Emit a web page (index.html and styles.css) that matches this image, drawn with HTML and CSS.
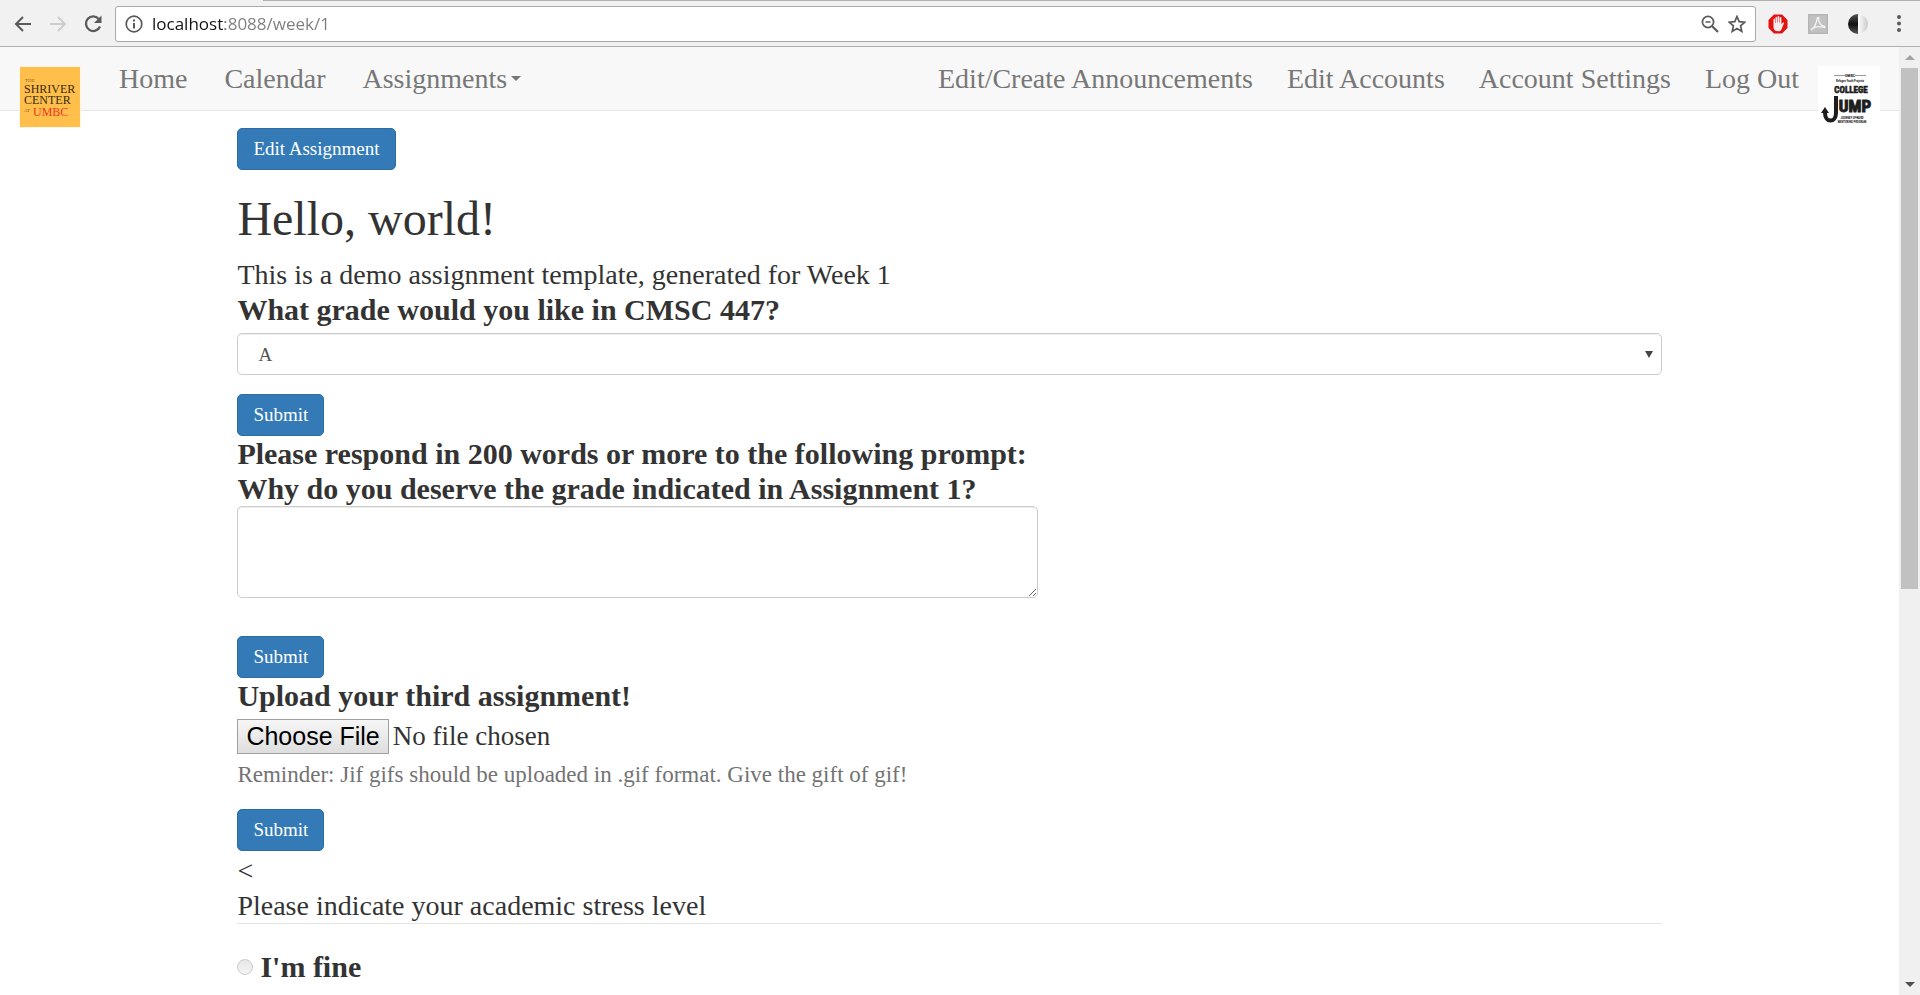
FILE: index.html
```html
<!DOCTYPE html>
<html lang="en">
<head>
<meta charset="utf-8">
<title>Week 1</title>
<link rel="stylesheet" href="styles.css">
</head>
<body>
<header class="toolbar">
  <div class="tab-edge"></div>
  <button class="tool" aria-label="Back"><svg width="20" height="20" viewBox="0 0 20 20"><path d="M18 10H3M10 3L3 10l7 7" fill="none" stroke="#5a5a5a" stroke-width="2"/></svg></button>
  <button class="tool" aria-label="Forward"><svg width="20" height="20" viewBox="0 0 20 20"><path d="M2 10h15M10 3l7 7-7 7" fill="none" stroke="#cecece" stroke-width="2"/></svg></button>
  <button class="tool" aria-label="Reload"><svg width="20" height="20" viewBox="0 0 20 20"><path d="M16 5.200A7.300 7.300 0 1 0 17 12.500" fill="none" stroke="#5a5a5a" stroke-width="2.300"/><path d="M18.500 1.500V9H11z" fill="#5a5a5a"/></svg></button>
  <div class="omnibox">
    <svg width="18" height="18" viewBox="0 0 18 18"><circle cx="9" cy="9" r="7.800" fill="none" stroke="#5a5a5a" stroke-width="1.700"/><path d="M8 4.500h2v2H8zM8 8h2v5.500H8z" fill="#5a5a5a"/></svg>
    <input class="url" type="text" aria-label="Address" value="localhost:8088/week/1">
    <button class="tool" aria-label="Zoom"><svg width="18" height="18" viewBox="0 0 18 18"><circle cx="7" cy="7" r="5.600" fill="none" stroke="#5a5a5a" stroke-width="1.700"/><path d="M4.500 7h5" stroke="#5a5a5a" stroke-width="1.500"/><path d="M11 11l6 6" stroke="#5a5a5a" stroke-width="2.200"/></svg></button>
    <button class="tool" aria-label="Bookmark"><svg width="18" height="18" viewBox="0 0 18 18"><path d="M9 1.500l2.200 5.200 5.600.5-4.200 3.700 1.200 5.500L9 13.500l-4.800 2.900 1.200-5.500L1.200 7.200l5.600-.5z" fill="none" stroke="#5a5a5a" stroke-width="1.700"/></svg></button>
  </div>
  <div class="extensions">
    <button class="tool" aria-label="Ad blocker"><svg width="20" height="20" viewBox="0 0 20 20"><path d="M6 .5h8L19.500 6v8L14 19.500H6L.5 14V6z" fill="#e2130f"/><path d="M5.500 9.500V5.200c0-1 1.500-1 1.500 0V9h.5V3.600c0-1.100 1.600-1.100 1.600 0V8.500h.5V2.900c0-1.100 1.700-1.100 1.700 0v5.600h.5V3.900c0-1.100 1.600-1.100 1.600 0v6.600l1-1.500c.7-1 1.900-.4 1.500.6l-2.300 5.300c-.7 1.600-1.600 2.300-3.300 2.300-3 0-4.800-1.500-4.800-4z" fill="#f3eeee"/></svg></button>
    <button class="tool" aria-label="PDF"><svg width="20" height="20" viewBox="0 0 20 20"><path d="M0 0h20v20H0z" fill="#b5b5b5"/><path d="M1.500 1.500h17v17h-17z" fill="#c1c1c1"/><path d="M3.500 15.500c2-.5 5-5.500 5.700-11 .2-1.500 1.800-1.500 1.500 0-.7 3.500 2.300 7.500 5.600 8 1.200.3.700 1.400-.6 1-3-1-7-1-10 .3-1.500.7-2.500 2-2.200 1.700z" fill="none" stroke="#f4f4f4" stroke-width="1.300"/></svg></button>
    <button class="tool" aria-label="Contrast"><svg width="20" height="20" viewBox="0 0 20 20"><defs><linearGradient id="dark" x2="0" y2="1"><stop stop-color="#555"/><stop offset=".5" stop-color="#111"/><stop offset="1" stop-color="#555"/></linearGradient><linearGradient id="light"><stop stop-color="#fff"/><stop offset="1" stop-color="#c9c9c9"/></linearGradient></defs><path d="M10 0a10 10 0 0 0 0 20z" fill="url(#dark)"/><path d="M10 0a10 10 0 0 1 0 20z" fill="url(#light)"/></svg></button>
  </div>
  <button class="tool more" aria-label="Menu"><svg width="6" height="20" viewBox="0 0 6 20"><g fill="#5a5a5a"><circle cx="3" cy="3" r="2"/><circle cx="3" cy="9.500" r="2"/><circle cx="3" cy="16" r="2"/></g></svg></button>
</header>
<div class="viewport">
  <div class="page">
    <nav class="navbar">
      <a class="logo" href="#" aria-label="Shriver Center"><svg width="62" height="62" viewBox="0 0 62 62"><path d="M0 0h62v62H0z" fill="#fff6e3"/><path d="M1 1h60v60H1z" fill="#ffbf4a"/><g font-family="Liberation Serif, serif" fill="#3a2a10"><text x="6" y="16" font-size="5" fill="#7d5d26">THE</text><text x="5" y="27" font-size="12">SHRIVER</text><text x="5" y="38" font-size="12">CENTER</text><text x="5" y="46" font-size="5" fill="#7d5d26">AT</text></g><text x="14" y="50" font-size="12" font-family="Liberation Serif, serif" fill="#ee3424">UMBC</text></svg></a>
      <div class="links">
        <a href="#">Home</a>
        <a href="#">Calendar</a>
        <a href="#" class="drop">Assignments<span class="caret"></span></a>
      </div>
      <div class="links right">
        <a href="#">Edit/Create Announcements</a>
        <a href="#">Edit Accounts</a>
        <a href="#">Account Settings</a>
        <a href="#">Log Out</a>
      </div>
      <a class="logo" href="#" aria-label="College Jump"><svg width="62" height="62" viewBox="0 0 62 62"><path d="M0 0h62v62H0z" fill="#fff"/><path d="M16 9.500h11M37 9.500h11" stroke="#999"/><g fill="#1d1d1d" font-weight="700" font-family="Roboto Condensed, Liberation Sans, sans-serif" text-anchor="middle"><text x="32" y="11" font-size="4">UMBC</text><text x="32" y="16" font-size="3">Refugee Youth Projects</text><text x="33" y="27" font-size="9" stroke="#1d1d1d" stroke-width=".6">COLLEGE</text><text x="37" y="46" font-size="17" stroke="#1d1d1d" stroke-width="1">UMP</text><text x="34" y="53" font-size="3">JOURNEY UPWARD</text><text x="34" y="57" font-size="3">MENTORING PROGRAM</text></g><path d="M18 30v17c0 10-11 10-11 0v-2" fill="none" stroke="#1d1d1d" stroke-width="4"/><path d="M3 47l4-6 4 6z" fill="#1d1d1d"/></svg></a>
    </nav>
    <main class="content">
      <button class="btn">Edit Assignment</button>
      <h1>Hello, world!</h1>
      <p class="text">This is a demo assignment template, generated for Week 1</p>
      <form class="task">
        <label for="grade">What grade would you like in CMSC 447?</label>
        <div class="picker"><select id="grade" class="field"><option>A</option></select></div>
        <button class="btn" type="button">Submit</button>
      </form>
      <form class="task">
        <label for="essay">Please respond in 200 words or more to the following prompt:<br>Why do you deserve the grade indicated in Assignment 1?</label>
        <textarea id="essay" class="field"></textarea>
        <button class="btn" type="button">Submit</button>
      </form>
      <form class="task">
        <label for="upload">Upload your third assignment!</label>
        <input id="upload" class="upload" type="file">
        <p class="help">Reminder: Jif gifs should be uploaded in .gif format. Give the gift of gif!</p>
        <button class="btn" type="button">Submit</button>
      </form>
      <div class="survey">
        <p class="text">&lt;</p>
        <fieldset>
          <legend>Please indicate your academic stress level</legend>
          <div class="choice"><input id="fine" type="radio" name="stress"><label for="fine">I'm fine</label></div>
        </fieldset>
      </div>
    </main>
  </div>
  <div class="scrollbar" aria-hidden="true"><span class="arrow up"></span><div class="track"><div class="thumb"></div></div><span class="arrow down"></span></div>
</div>
</body>
</html>
```
FILE: styles.css
```css
* { box-sizing: border-box; }
body {
  margin: 0;
  min-height: 100vh;
  display: flex;
  flex-direction: column;
  font-family: Georgia, "Liberation Serif", serif;
  font-size: 28px;
  line-height: 35px;
  color: #333;
  background: #fff;
}
button { font: inherit; cursor: pointer; }
svg { display: block; }

/* Browser toolbar */
.toolbar {
  position: relative;
  display: flex;
  align-items: center;
  height: 47px;
  padding: 1px 18px 0 13px;
  gap: 15px;
  background: #f1f1f1;
  border-bottom: 1px solid #b0b0b0;
}
.tab-edge {
  position: absolute;
  top: 0;
  left: 263px;
  right: 0;
  height: 1px;
  background: #b0b0b0;
}
.tool { flex: none; padding: 0; border: 0; background: none; }
.omnibox {
  flex: 1;
  display: flex;
  align-items: center;
  gap: 9px;
  height: 36px;
  padding: 0 9px;
  margin: 0 -3px;
  background: #fff;
  border: 1px solid #a9a9a9;
  border-radius: 3px;
}
.url {
  flex: 1;
  min-width: 0;
  padding: 0;
  border: 0;
  outline: 0;
  font: 17px/26px "Open Sans", sans-serif;
  color: transparent;
  background: linear-gradient(to right, #111 73px, #7d7d7d 73px);
  background-clip: text;
}
.extensions { display: flex; gap: 20px; }
.more { margin-left: 13px; }

/* Page area with its scroll bar */
.viewport { flex: 1; display: flex; }
.page { flex: 1; min-width: 0; }
.scrollbar {
  width: 21px;
  display: flex;
  flex-direction: column;
  align-items: center;
  background: #f0f0f0;
}
.track { flex: 1; width: 17px; }
.thumb { height: 57.5%; background: #c1c1c1; }
.arrow { height: 21px; display: flex; align-items: center; }
.arrow::before { content: ""; border: 5px solid transparent; }
.up::before { border-top: 0; border-bottom-color: #a3a3a3; }
.down::before { border-bottom: 0; border-top-color: #505050; }

.navbar {
  display: flex;
  align-items: flex-start;
  height: 64px;
  padding: 0 19px;
  background: #f8f8f8;
  border-bottom: 1px solid #e7e7e7;
}
.logo { flex: none; margin-top: 19px; }
.links { display: flex; gap: 37px; margin: 14px 19px 0 38px; }
.right { gap: 34px; margin-left: auto; }
.links a { color: #777; text-decoration: none; white-space: nowrap; }
.drop { display: flex; align-items: center; gap: 4px; }
.caret { border: 5px solid transparent; border-top-color: #777; border-bottom: 0; }

.content { width: 75%; margin: 0 auto; padding-top: 17px; }
.btn {
  display: block;
  height: 42px;
  padding: 0 15px;
  font-size: 19px;
  line-height: 40px;
  color: #fff;
  background: #337ab7;
  border: 1px solid #2e6da4;
  border-radius: 5px;
}
h1 { margin: 24px 0 13px; font-size: 48px; line-height: 50px; font-weight: 400; }
p { margin: 0; }
.task { display: flex; flex-direction: column; align-items: flex-start; }
label { font-size: 30px; font-weight: 700; }
.field {
  display: block;
  border: 1px solid #ccc;
  border-radius: 5px;
  background: #fff;
  box-shadow: inset 0 1px 1px rgba(0, 0, 0, .075);
  color: #555;
  font: inherit;
  font-size: 19px;
}
.picker {
  position: relative;
  width: 100%;
  margin: 6px 0 19px;
}
.picker::after {
  content: "";
  position: absolute;
  top: 18px;
  right: 9px;
  border: 4px solid transparent;
  border-top: 7px solid #444;
  border-bottom: 0;
  pointer-events: none;
}
select.field { width: 100%; height: 42px; padding: 0 20px; appearance: none; }
textarea { width: 801px; max-width: 100%; height: 92px; margin-bottom: 38px; }
.upload {
  height: 37px;
  margin: 6px 0 4px;
  font: inherit;
  font-size: 27px;
  color: #333;
}
.upload::file-selector-button {
  height: 35px;
  padding: 0 8px;
  margin-right: 4px;
  font: 25px/31px "Liberation Sans", Arial, sans-serif;
  color: #000;
  background: linear-gradient(#f6f6f6, #dedede);
  border: 1px solid #a0a0a0;
  border-radius: 0;
}
.help { margin-bottom: 19px; font-size: 23px; line-height: 30px; color: #737373; }
.survey { padding-top: 2px; }
fieldset { margin: 0; padding: 0; border: 0; }
legend {
  width: 100%;
  padding: 0;
  margin-bottom: 25px;
  border-bottom: 1px solid #e5e5e5;
}
.choice { display: flex; align-items: center; gap: 7px; }
.choice input {
  appearance: none;
  width: 16px;
  height: 16px;
  margin: 0;
  border: 1px solid #ccc;
  border-radius: 50%;
  background: linear-gradient(#e6e6e6, #f4f4f4);
}
```
